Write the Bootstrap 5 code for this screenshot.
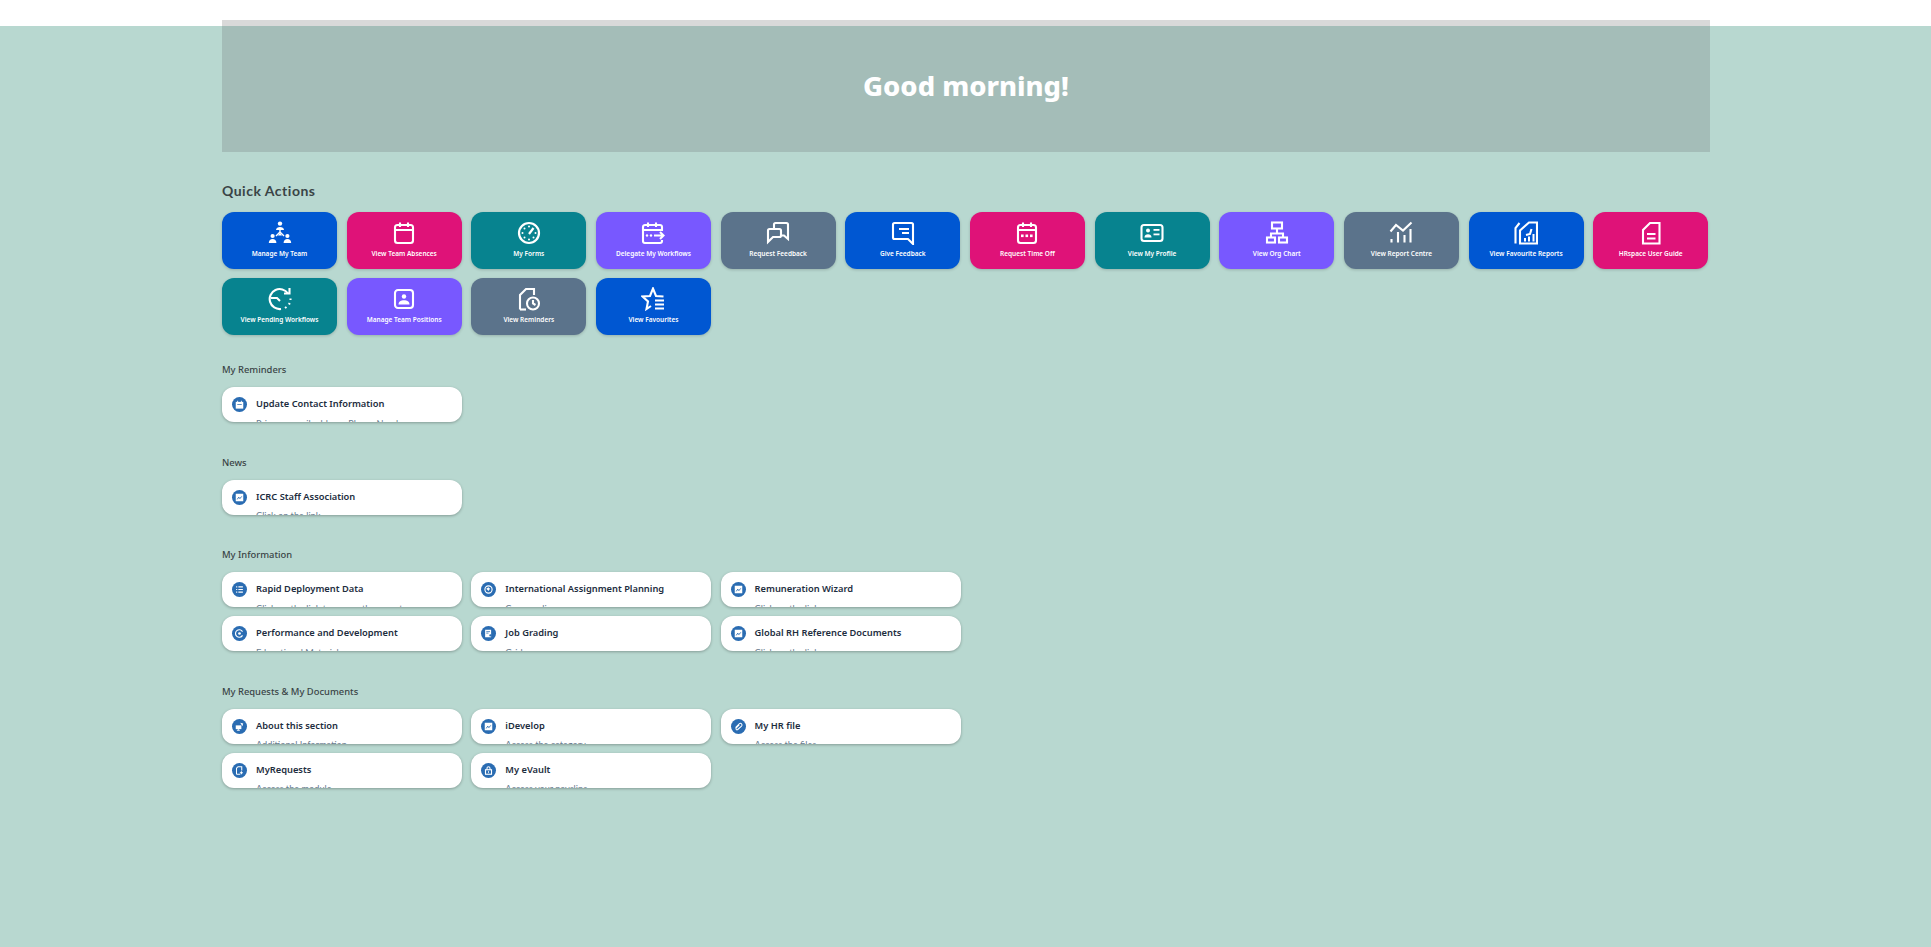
<!DOCTYPE html>
<html lang="en">
<head>
<meta charset="utf-8">
<title>Home</title>
<link href="https://cdn.jsdelivr.net/npm/bootstrap@5.3.0/dist/css/bootstrap.min.css" rel="stylesheet">
<style>
html,body{height:100%}
body{background:linear-gradient(#fff 26px,#b8d8d0 26px);font-family:Lato,"Noto Sans",sans-serif;overflow:hidden}
.shell{width:1488px;margin-left:222px;padding-top:20px}
.hero{height:132px;background:#a4bdb8;border-top:6px solid #d9d9d9;color:#fff}
.hero h1{font-size:27.4px;font-weight:800;margin:0 0 6px;font-family:"Noto Sans",sans-serif}
.qa-title{font-family:Lato,sans-serif;font-weight:700;font-size:14px;letter-spacing:.5px;color:#3a4446;line-height:20px;margin:29px 0 11px}
.qa-grid{display:grid;grid-template-columns:repeat(12,115px);column-gap:9.67px;row-gap:9px}
.qa{height:57px;border-radius:12px;color:#fff;box-shadow:0 1px 3px rgba(0,0,0,.18);padding-top:9px}
.qa svg{width:24px;height:24px;display:block}
.qa span{font-family:"Noto Sans",sans-serif;font-size:6.5px;font-weight:600;line-height:11px;margin-top:3px;white-space:nowrap}
.c-blue{background:#0057d2}.c-pink{background:#df1278}.c-teal{background:#07838f}.c-indigo{background:#7858ff}.c-slate{background:#5b738b}
.sec-title{font-family:"Noto Sans",sans-serif;font-size:9.4px;font-weight:500;color:#3a4446;line-height:14px;margin:0 0 10px}
.sec{margin-bottom:33.67px}
.sec.first{margin-top:28px}
.tile-grid{display:grid;grid-template-columns:repeat(3,240px);column-gap:9.3px;row-gap:9px}
.tile{height:35px;overflow:hidden;background:#fff;border-radius:12px;box-shadow:0 1px 3px rgba(0,0,0,.28);padding:10px 0 0 10px;gap:9px}
.dot{width:15px;height:15px;flex:none;border-radius:50%;background:#2a6cb2}
.dot svg{width:9px;height:9px;display:block}
.tile b{display:block;font-family:"Noto Sans",sans-serif;font-size:9.3px;font-weight:600;color:#1d2d3e;line-height:14px;white-space:nowrap}
.tile small{display:block;font-size:9.2px;color:#6a7d90;line-height:12px;margin-top:6.5px;white-space:nowrap}
</style>
</head>
<body>
<svg width="0" height="0" class="d-block" aria-hidden="true">
<defs>
<symbol id="i-team" viewBox="0 0 24 24"><g fill="#fff"><circle cx="12" cy="2.600" r="2.200"/><path d="M8 9c0-2 2-3 4-3s4 1 4 3z"/><circle cx="4.600" cy="15" r="2.100"/><path d="M.8 22c0-2.600 1.700-4 3.800-4s3.800 1.400 3.800 4z"/><circle cx="19.400" cy="15" r="2.100"/><path d="M15.600 22c0-2.600 1.700-4 3.800-4s3.800 1.400 3.800 4z"/><path d="M12 11.500l2 3h-4z"/></g><path d="M12 9v3M12 11l-4 4M12 11l4 4" stroke="#fff" stroke-width="1.400" fill="none"/></symbol>
<symbol id="i-cal" viewBox="0 0 24 24"><g fill="none" stroke="#fff" stroke-width="2.100"><rect x="3" y="4" width="18" height="18" rx="2.500"/><path d="M3 9h18M8 1.500V6M16 1.500V6"/></g></symbol>
<symbol id="i-gauge" viewBox="0 0 24 24"><circle cx="12" cy="12" r="10" fill="none" stroke="#fff" stroke-width="2.200"/><path d="M12 13l4.500-6" stroke="#fff" stroke-width="2.200"/><g fill="#fff"><circle cx="12" cy="5.500" r="1"/><circle cx="7.500" cy="7.500" r="1"/><circle cx="5.500" cy="12" r="1"/><circle cx="7.500" cy="16.500" r="1"/><circle cx="12" cy="18.500" r="1"/><circle cx="16.500" cy="16.500" r="1"/><circle cx="18.500" cy="12" r="1"/></g></symbol>
<symbol id="i-deleg" viewBox="0 0 24 24"><g fill="none" stroke="#fff" stroke-width="2.100"><path d="M21 10V6a2 2 0 0 0-2-2H4a2 2 0 0 0-2 2v14a2 2 0 0 0 2 2h15a2 2 0 0 0 2-2v-1"/><path d="M2 9h19M7 1.500V6M15 1.500V6M13 14.500h9M19 11l3.500 3.500-3.500 3.500"/></g><g fill="#fff"><circle cx="6" cy="14.500" r="1.200"/><circle cx="10" cy="14.500" r="1.200"/></g></symbol>
<symbol id="i-req" viewBox="0 0 24 24"><g fill="none" stroke="#fff" stroke-width="2.100"><path d="M8 8V3.500A1.500 1.500 0 0 1 9.500 2h11A1.500 1.500 0 0 1 22 3.500V18l-4-3.500h-3"/><path d="M3.500 8h10A1.500 1.500 0 0 1 15 9.500v5a1.500 1.500 0 0 1-1.500 1.500H7l-5 5V9.500A1.500 1.500 0 0 1 3.500 8z"/></g></symbol>
<symbol id="i-give" viewBox="0 0 24 24"><g fill="none" stroke="#fff" stroke-width="2.100"><path d="M3.500 2h17A1.500 1.500 0 0 1 22 3.500V23l-5-5H3.500A1.500 1.500 0 0 1 2 16.500v-13A1.500 1.500 0 0 1 3.500 2z"/><path d="M8 8h10M11 12h7"/></g></symbol>
<symbol id="i-off" viewBox="0 0 24 24"><g fill="none" stroke="#fff" stroke-width="2.100"><rect x="3" y="4" width="18" height="18" rx="2.500"/><path d="M3 9h18M8 1.500V6M16 1.500V6"/></g><g fill="#fff"><rect x="6" y="13.500" width="2.600" height="2.600"/><rect x="10.500" y="13.500" width="2.600" height="2.600"/><rect x="15" y="13.500" width="2.600" height="2.600"/></g></symbol>
<symbol id="i-prof" viewBox="0 0 24 24"><rect x="1.500" y="4" width="21" height="16" rx="2.500" fill="none" stroke="#fff" stroke-width="2.100"/><g fill="#fff"><circle cx="8" cy="9.500" r="2"/><path d="M4.500 16.500c0-2 1.500-3.200 3.500-3.200s3.500 1.200 3.500 3.200z"/><rect x="13.500" y="8" width="6" height="1.800"/><rect x="13.500" y="12.500" width="6" height="1.800"/></g></symbol>
<symbol id="i-org" viewBox="0 0 24 24"><g fill="none" stroke="#fff" stroke-width="2.100"><rect x="7" y="1.500" width="10" height="6"/><rect x="2" y="16.500" width="8" height="5"/><rect x="14" y="16.500" width="8" height="5"/><path d="M12 7.500v5M6 16.500v-4h12v4"/></g></symbol>
<symbol id="i-rep" viewBox="0 0 24 24"><g fill="none" stroke="#fff" stroke-width="2.100"><path d="M1.500 10.500L7 4l7 5.500L22.500 1.500"/><path d="M2.500 18v3.500M9 11v10.500M15.500 14v7.500M21.500 8v13.500"/></g></symbol>
<symbol id="i-favrep" viewBox="0 0 24 24"><g fill="none" stroke="#fff" stroke-width="2.100"><path d="M1.500 22.500V7L5.500 2"/><path d="M6 22.500h17V1.500h-8l-9 8z"/><path d="M12 14l4-1 1.500-5"/></g><g fill="#fff"><rect x="10" y="17" width="2" height="3.500"/><rect x="14" y="15.500" width="2" height="5"/><rect x="18.500" y="13" width="2" height="7.500"/></g></symbol>
<symbol id="i-doc" viewBox="0 0 24 24"><g fill="none" stroke="#fff" stroke-width="2.100"><path d="M4 22.500V9l7-7h9.500v20.500z"/><path d="M8 13h8.500M8 17.500h8.500"/></g></symbol>
<symbol id="i-pend" viewBox="0 0 24 24"><g fill="none" stroke="#fff" stroke-width="2.100"><path d="M20 6.500A10 10 0 1 0 13 22"/><path d="M3 11h6l3 3"/><path d="M21.500 1v5.500H16"/><path d="M17 21l1.500-1M21 17.500l.7-1.500M22.500 13v-1.500"/></g></symbol>
<symbol id="i-pos" viewBox="0 0 24 24"><rect x="3" y="3" width="18" height="18" rx="3" fill="none" stroke="#fff" stroke-width="2.100"/><g fill="#fff"><circle cx="12" cy="9.500" r="2.200"/><path d="M6.500 17.500c0-3 2.500-4.300 5.500-4.300s5.500 1.300 5.500 4.300z"/></g></symbol>
<symbol id="i-rem" viewBox="0 0 24 24"><g fill="none" stroke="#fff" stroke-width="2.100"><path d="M3 22.500V8l6-6h8v6"/><path d="M3 22.500h6"/><circle cx="16" cy="16.500" r="6"/><path d="M16 13v3.500l2.500 1.500"/></g></symbol>
<symbol id="i-star" viewBox="0 0 24 24"><g fill="none" stroke="#fff" stroke-width="2.100"><path d="M22.500 9.500l-7.500-.5-3-7.500-3 7.500-7.500.5 5.500 5-1.500 7.500 4.500-3"/><path d="M14 13.500h9M14 17.500h9M14 21.500h9"/></g></symbol>
<symbol id="s-cal" viewBox="0 0 12 12"><rect x="1" y="2.500" width="10" height="9" fill="#fff"/><path d="M3.500 1v3M8.500 1v3" stroke="#fff" stroke-width="1.200"/><path d="M3 6h6" stroke="#2a6cb2"/></symbol>
<symbol id="s-list" viewBox="0 0 12 12"><path d="M1.500 2.500h1.500M4.500 2.500h6M1.500 6h1.500M4.500 6h6M1.500 9.500h1.500M4.500 9.500h6" stroke="#fff" stroke-width="1.500"/></symbol>
<symbol id="s-globe" viewBox="0 0 12 12"><circle cx="6" cy="6" r="4.800" fill="none" stroke="#fff" stroke-width="1.500"/><path d="M3 5l3-2 2 2-2 3z" fill="#fff"/></symbol>
<symbol id="s-chart" viewBox="0 0 12 12"><rect x="1" y="1" width="10" height="10" fill="#fff"/><path d="M3 8.500l2-3 1.500 2 2.500-3" fill="none" stroke="#2a6cb2" stroke-width="1.200"/></symbol>
<symbol id="s-perf" viewBox="0 0 12 12"><path d="M10 3.500A5 5 0 1 0 10 8.500" fill="none" stroke="#fff" stroke-width="1.500"/><circle cx="6" cy="6" r="1.800" fill="#fff"/></symbol>
<symbol id="s-grade" viewBox="0 0 12 12"><rect x="1.500" y="1" width="8" height="10" fill="#fff"/><path d="M3 3.500h5M3 5.500h3" stroke="#2a6cb2"/><circle cx="8.500" cy="8.500" r="1.500" fill="#2a6cb2"/></symbol>
<symbol id="s-about" viewBox="0 0 12 12"><rect x="1" y="4.500" width="7.500" height="5" fill="#fff"/><path d="M4.500 9.500v1.500M2.500 11h4" fill="none" stroke="#fff" stroke-width="1.200"/><path d="M7 1l4 1-1.200 3.800z" fill="#fff"/></symbol>
<symbol id="s-clip" viewBox="0 0 12 12"><path d="M2 7.500l5-5a2 2 0 0 1 3 3l-5 4.500a1.200 1.200 0 0 1-2-2l4-4" fill="none" stroke="#fff" stroke-width="1.400"/></symbol>
<symbol id="s-req" viewBox="0 0 12 12"><path d="M2 11V3l2-2h5v5" fill="none" stroke="#fff" stroke-width="1.400"/><path d="M2 11h5" stroke="#fff" stroke-width="1.400"/><path d="M8.500 7v4M6.500 9h4" stroke="#fff" stroke-width="1.400"/></symbol>
<symbol id="s-lock" viewBox="0 0 12 12"><rect x="2" y="5" width="8" height="6" fill="none" stroke="#fff" stroke-width="1.500"/><path d="M4 5V3a2 2 0 0 1 4 0v2" fill="none" stroke="#fff" stroke-width="1.400"/><rect x="5.300" y="7" width="1.400" height="2" fill="#fff"/></symbol>
</defs>
</svg>
<main class="shell">
  <div class="hero d-flex align-items-center justify-content-center"><h1>Good morning!</h1></div>
  <h2 class="qa-title">Quick Actions</h2>
  <div class="qa-grid">
    <a class="qa c-blue d-flex flex-column align-items-center text-decoration-none"><svg><use href="#i-team"/></svg><span>Manage My Team</span></a>
    <a class="qa c-pink d-flex flex-column align-items-center text-decoration-none"><svg><use href="#i-cal"/></svg><span>View Team Absences</span></a>
    <a class="qa c-teal d-flex flex-column align-items-center text-decoration-none"><svg><use href="#i-gauge"/></svg><span>My Forms</span></a>
    <a class="qa c-indigo d-flex flex-column align-items-center text-decoration-none"><svg><use href="#i-deleg"/></svg><span>Delegate My Workflows</span></a>
    <a class="qa c-slate d-flex flex-column align-items-center text-decoration-none"><svg><use href="#i-req"/></svg><span>Request Feedback</span></a>
    <a class="qa c-blue d-flex flex-column align-items-center text-decoration-none"><svg><use href="#i-give"/></svg><span>Give Feedback</span></a>
    <a class="qa c-pink d-flex flex-column align-items-center text-decoration-none"><svg><use href="#i-off"/></svg><span>Request Time Off</span></a>
    <a class="qa c-teal d-flex flex-column align-items-center text-decoration-none"><svg><use href="#i-prof"/></svg><span>View My Profile</span></a>
    <a class="qa c-indigo d-flex flex-column align-items-center text-decoration-none"><svg><use href="#i-org"/></svg><span>View Org Chart</span></a>
    <a class="qa c-slate d-flex flex-column align-items-center text-decoration-none"><svg><use href="#i-rep"/></svg><span>View Report Centre</span></a>
    <a class="qa c-blue d-flex flex-column align-items-center text-decoration-none"><svg><use href="#i-favrep"/></svg><span>View Favourite Reports</span></a>
    <a class="qa c-pink d-flex flex-column align-items-center text-decoration-none"><svg><use href="#i-doc"/></svg><span>HRspace User Guide</span></a>
    <a class="qa c-teal d-flex flex-column align-items-center text-decoration-none"><svg><use href="#i-pend"/></svg><span>View Pending Workflows</span></a>
    <a class="qa c-indigo d-flex flex-column align-items-center text-decoration-none"><svg><use href="#i-pos"/></svg><span>Manage Team Positions</span></a>
    <a class="qa c-slate d-flex flex-column align-items-center text-decoration-none"><svg><use href="#i-rem"/></svg><span>View Reminders</span></a>
    <a class="qa c-blue d-flex flex-column align-items-center text-decoration-none"><svg><use href="#i-star"/></svg><span>View Favourites</span></a>
  </div>

  <section class="sec first">
    <h3 class="sec-title">My Reminders</h3>
    <div class="tile-grid">
      <a class="tile d-flex text-decoration-none"><i class="dot d-flex align-items-center justify-content-center"><svg><use href="#s-cal"/></svg></i><div><b>Update Contact Information</b><small>Primary email address, Phone Number</small></div></a>
    </div>
  </section>
  <section class="sec">
    <h3 class="sec-title">News</h3>
    <div class="tile-grid">
      <a class="tile d-flex text-decoration-none"><i class="dot d-flex align-items-center justify-content-center"><svg><use href="#s-chart"/></svg></i><div><b>ICRC Staff Association</b><small>Click on the link</small></div></a>
    </div>
  </section>
  <section class="sec">
    <h3 class="sec-title">My Information</h3>
    <div class="tile-grid">
      <a class="tile d-flex text-decoration-none"><i class="dot d-flex align-items-center justify-content-center"><svg><use href="#s-list"/></svg></i><div><b>Rapid Deployment Data</b><small>Click on the link to access the report</small></div></a>
      <a class="tile d-flex text-decoration-none"><i class="dot d-flex align-items-center justify-content-center"><svg><use href="#s-globe"/></svg></i><div><b>International Assignment Planning</b><small>Compendium</small></div></a>
      <a class="tile d-flex text-decoration-none"><i class="dot d-flex align-items-center justify-content-center"><svg><use href="#s-chart"/></svg></i><div><b>Remuneration Wizard</b><small>Click on the link</small></div></a>
      <a class="tile d-flex text-decoration-none"><i class="dot d-flex align-items-center justify-content-center"><svg><use href="#s-perf"/></svg></i><div><b>Performance and Development</b><small>Educational Material</small></div></a>
      <a class="tile d-flex text-decoration-none"><i class="dot d-flex align-items-center justify-content-center"><svg><use href="#s-grade"/></svg></i><div><b>Job Grading</b><small>Grid</small></div></a>
      <a class="tile d-flex text-decoration-none"><i class="dot d-flex align-items-center justify-content-center"><svg><use href="#s-chart"/></svg></i><div><b>Global RH Reference Documents</b><small>Click on the link</small></div></a>
    </div>
  </section>
  <section class="sec">
    <h3 class="sec-title">My Requests &amp; My Documents</h3>
    <div class="tile-grid">
      <a class="tile d-flex text-decoration-none"><i class="dot d-flex align-items-center justify-content-center"><svg><use href="#s-about"/></svg></i><div><b>About this section</b><small>Additional Information</small></div></a>
      <a class="tile d-flex text-decoration-none"><i class="dot d-flex align-items-center justify-content-center"><svg><use href="#s-chart"/></svg></i><div><b>iDevelop</b><small>Access the category</small></div></a>
      <a class="tile d-flex text-decoration-none"><i class="dot d-flex align-items-center justify-content-center"><svg><use href="#s-clip"/></svg></i><div><b>My HR file</b><small>Access the files</small></div></a>
      <a class="tile d-flex text-decoration-none"><i class="dot d-flex align-items-center justify-content-center"><svg><use href="#s-req"/></svg></i><div><b>MyRequests</b><small>Access the module</small></div></a>
      <a class="tile d-flex text-decoration-none"><i class="dot d-flex align-items-center justify-content-center"><svg><use href="#s-lock"/></svg></i><div><b>My eVault</b><small>Access your payslips</small></div></a>
    </div>
  </section>
</main>
<script src="https://cdn.jsdelivr.net/npm/bootstrap@5.3.0/dist/js/bootstrap.bundle.min.js"></script>
</body>
</html>
